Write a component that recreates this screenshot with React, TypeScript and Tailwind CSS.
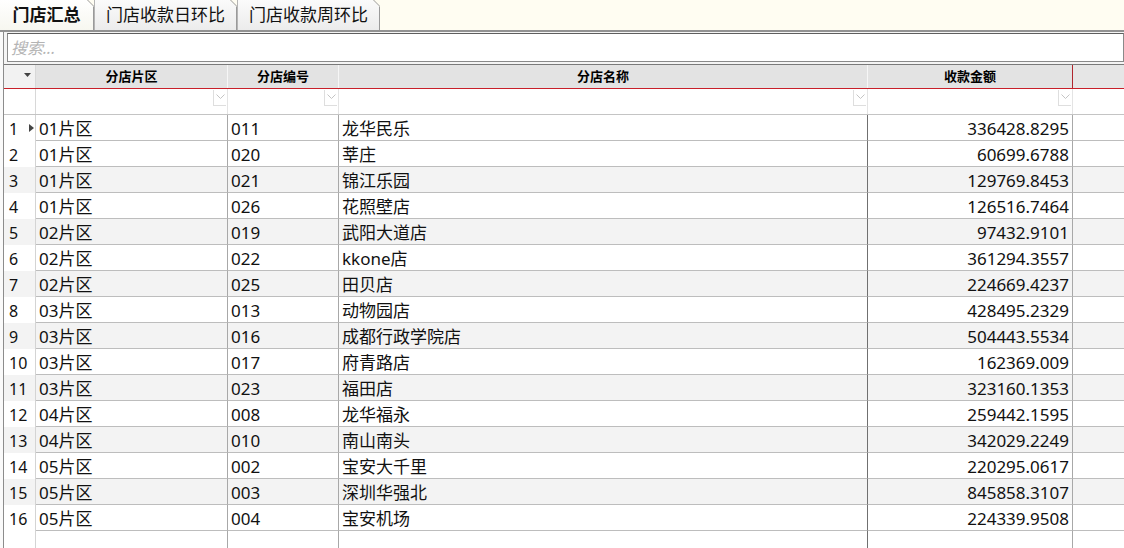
import React from "react";

type Store = { area: string; code: string; name: string; amount: string };

const rows: Store[] = [
  { area: "01片区", code: "011", name: "龙华民乐", amount: "336428.8295" },
  { area: "01片区", code: "020", name: "莘庄", amount: "60699.6788" },
  { area: "01片区", code: "021", name: "锦江乐园", amount: "129769.8453" },
  { area: "01片区", code: "026", name: "花照壁店", amount: "126516.7464" },
  { area: "02片区", code: "019", name: "武阳大道店", amount: "97432.9101" },
  { area: "02片区", code: "022", name: "kkone店", amount: "361294.3557" },
  { area: "02片区", code: "025", name: "田贝店", amount: "224669.4237" },
  { area: "03片区", code: "013", name: "动物园店", amount: "428495.2329" },
  { area: "03片区", code: "016", name: "成都行政学院店", amount: "504443.5534" },
  { area: "03片区", code: "017", name: "府青路店", amount: "162369.009" },
  { area: "03片区", code: "023", name: "福田店", amount: "323160.1353" },
  { area: "04片区", code: "008", name: "龙华福永", amount: "259442.1595" },
  { area: "04片区", code: "010", name: "南山南头", amount: "342029.2249" },
  { area: "05片区", code: "002", name: "宝安大千里", amount: "220295.0617" },
  { area: "05片区", code: "003", name: "深圳华强北", amount: "845858.3107" },
  { area: "05片区", code: "004", name: "宝安机场", amount: "224339.9508" },
];

function DogEar() {
  return (
    <svg className="absolute right-[-1px] top-0" width="7" height="7" viewBox="0 0 7 7">
      <polygon points="0,0 7,0 7,7" fill="#fffdf2" />
      <line x1="0.5" y1="0" x2="7" y2="6.5" stroke="#9a9a9a" strokeWidth="1" />
    </svg>
  );
}

function Tab({ label, active, width }: { label: string; active?: boolean; width: string }) {
  return (
    <div
      className={`relative flex h-[30px] items-center justify-center border-r border-[#9a9a9a] ${width} ${
        active
          ? "bg-gradient-to-b from-[#ffffff] to-[#f7f7f0] font-bold"
          : "border-l border-l-[#b5b5b5] bg-gradient-to-b from-[#fbfbfb] to-[#ececec]"
      } text-[17px] text-[#111]`}
    >
      {label}
      <DogEar />
    </div>
  );
}

function FilterChevron() {
  return (
    <div className="absolute right-[1px] top-[1px] flex h-[16px] w-[13px] justify-center border-b border-l border-[#dedede] pt-[4px]">
      <svg width="9" height="6" viewBox="0 0 9 6">
        <polyline points="0.5,0.5 4.5,4.5 8.5,0.5" fill="none" stroke="#c4c4c4" strokeWidth="1" />
      </svg>
    </div>
  );
}

export default function App() {
  return (
    <div className="h-[548px] w-[1124px] overflow-hidden bg-[#fafafa] font-['Noto_Sans','Noto_Sans_CJK_SC',sans-serif] text-[#111]">
      {/* tab strip */}
      <div className="flex h-[32px] border-b-2 border-[#929292] bg-[#fffdf2]">
        <Tab label="门店汇总" active width="w-[94px]" />
        <Tab label="门店收款日环比" width="w-[143px]" />
        <Tab label="门店收款周环比" width="w-[143px]" />
      </div>

      <div className="ml-[3px] h-[516px] border-l border-[#8c8c8c] bg-white">
        {/* search */}
        <div className="bg-[#f4f4f4] pl-[3px] pt-[1px] pb-[2px]">
          <div className="flex h-[29px] items-center border border-[#8a8a8a] border-t-[#5e5e5e] bg-white pl-[3px] text-[16px] italic text-[#b4b4b4]">
            搜索...
          </div>
        </div>

        {/* grid */}
        <div className="border-t border-[#7a7a7a]">
          {/* header */}
          <div className="flex h-[24px] border-b border-[#c8202a] text-[13px] font-bold text-black">
            <div className="relative w-[32px] border-r border-[#d8d8d8] bg-[#f2f2f2]">
              <svg className="absolute right-[4px] top-[8px]" width="7" height="4" viewBox="0 0 7 4">
                <polygon points="0,0 7,0 3.5,4" fill="#444" />
              </svg>
            </div>
            <div className="flex w-[192px] items-center justify-center border-r border-[#f6f6f6] bg-[#e3e3e3]">分店片区</div>
            <div className="flex w-[111px] items-center justify-center border-r border-[#f6f6f6] bg-[#e3e3e3]">分店编号</div>
            <div className="flex w-[529px] items-center justify-center border-r border-[#f6f6f6] bg-[#e3e3e3]">分店名称</div>
            <div className="flex w-[205px] items-center justify-center border-r border-[#b0262e] bg-[#e3e3e3]">收款金额</div>
            <div className="flex-1 bg-[#e6e6e6]" />
          </div>

          {/* filter row */}
          <div className="flex h-[26px] border-b border-[#c4c4c4] bg-white">
            <div className="w-[32px] border-r border-[#d8d8d8]" />
            <div className="relative w-[192px] border-r border-[#e4e4e4]"><FilterChevron /></div>
            <div className="relative w-[111px] border-r border-[#e4e4e4]"><FilterChevron /></div>
            <div className="relative w-[529px] border-r border-[#e4e4e4]"><FilterChevron /></div>
            <div className="relative w-[205px] border-r border-[#e4e4e4]"><FilterChevron /></div>
            <div className="flex-1" />
          </div>

          {/* data rows */}
          {rows.map((r, i) => {
            const shaded = i % 2 === 0 && i > 0;
            return (
              <div
                key={i}
                className={`flex h-[26px] text-[17px] leading-none ${shaded ? "bg-[#f3f3f3]" : "bg-white"}`}
              >
                <div className="relative flex w-[32px] items-center border-r border-[#d4d4d4] pl-[5px] pt-[2px] text-[16px]">
                  {i + 1}
                  {i === 0 && (
                    <svg className="absolute left-[25px] top-[9px]" width="5" height="8" viewBox="0 0 5 8">
                      <polygon points="0,0 5,4 0,8" fill="#444" />
                    </svg>
                  )}
                </div>
                <div className="flex w-[192px] items-center border-b border-r border-[#bdbdbd] border-r-[#a8a8a8] pl-[3px] pt-[1px]">{r.area}</div>
                <div className="flex w-[111px] items-center border-b border-r border-[#bdbdbd] border-r-[#a8a8a8] pl-[3px] pt-[1px]">{r.code}</div>
                <div className="flex w-[529px] items-center border-b border-r border-[#bdbdbd] border-r-[#707070] pl-[3px] pt-[1px]">{r.name}</div>
                <div className="flex w-[205px] items-center justify-end border-b border-r border-[#bdbdbd] border-r-[#a8a8a8] pr-[3px] pt-[1px]">{r.amount}</div>
                <div className="flex-1 border-b border-[#bdbdbd]" />
              </div>
            );
          })}

          {/* trailing empty space */}
          <div className="flex h-[20px] bg-white">
            <div className="w-[32px] border-r border-[#d4d4d4]" />
            <div className="w-[192px] border-r border-[#a8a8a8]" />
            <div className="w-[111px] border-r border-[#a8a8a8]" />
            <div className="w-[529px] border-r border-[#707070]" />
            <div className="w-[205px] border-r border-[#a8a8a8]" />
            <div className="flex-1" />
          </div>
        </div>
      </div>
    </div>
  );
}
